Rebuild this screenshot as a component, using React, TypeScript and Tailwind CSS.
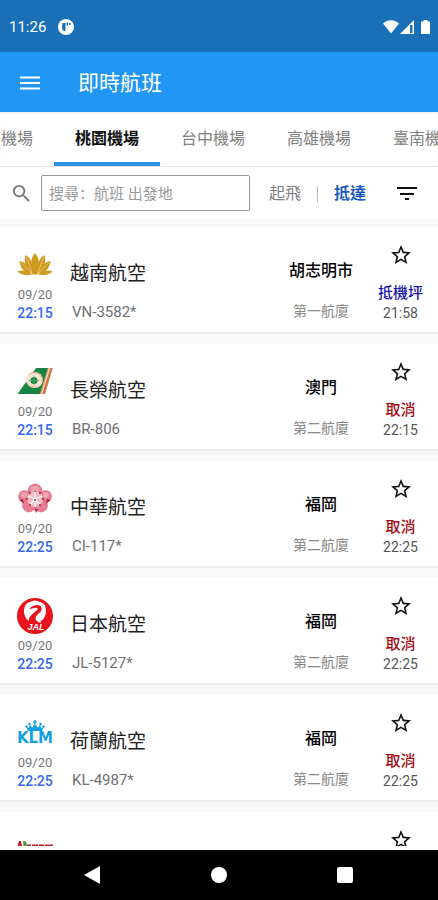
import { useState, type ReactNode } from 'react'

type Flight = {
  id: string
  airline: string
  code: string
  city: string
  terminal: string
  date: string
  time: string
  status: string
  actual: string
  logo: ReactNode
}

function LotusLogo() {
  return (
    <svg viewBox="0 0 36 36" className="size-9" aria-hidden="true">
      <g fill="#cf9a1e">
        <path d="M18 6c4 4.500 5 10 2.500 21.500h-5C13 16 14 10.500 18 6z" />
        <path d="M8.500 8c5.500 3 7 8 6.500 17.500C8.500 21 6.500 15 8.500 8z" />
        <path d="M27.500 8c-5.500 3-7 8-6.500 17.500 6.500-4.500 8.500-10.500 6.500-17.500z" />
        <path d="M2.500 14c5.500 1 10.500 5 12.500 12.500C7.500 26 3 21 2.500 14z" />
        <path d="M33.500 14c-5.500 1-10.500 5-12.500 12.500 7.500-.5 12-5.500 12.500-12.500z" />
        <path d="M.5 24.500c5-2 10-.5 15.500 2.500-5.500 2-11 1.500-15.500-2.500z" />
        <path d="M35.500 24.500c-5-2-10-.5-15.500 2.500 5.500 2 11 1.500 15.500-2.500z" />
      </g>
      <path
        d="M14.800 26C13 19 11 14 9 10M21.200 26C23 19 25 14 27 10M15 27C11 22 7 18 4 16M21 27c4-5 8-9 11-11"
        fill="none"
        stroke="#f3dfa6"
        strokeWidth=".6"
      />
    </svg>
  )
}

function EvaLogo() {
  return (
    <svg viewBox="0 0 36 36" className="size-9" aria-hidden="true">
      <path d="M.5 30L19 4h16.500L28 30z" fill="#168444" />
      <path d="M35.500 4H31l-8 26h4.500z" fill="#f6e3cc" />
      <path d="M35.500 4h-2.200l-8 26h2.200z" fill="#dd6a33" />
      <path d="M31.500 4l-7.800 26" stroke="#dd6a33" strokeWidth=".7" />
      <ellipse cx="17.500" cy="16" rx="8.500" ry="8" fill="#f5e6d3" />
      <path d="M12 10.500a8 8 0 0 1 13 8" fill="none" stroke="#e0a878" />
      <path d="M10 19a8 8 0 0 0 10 3.500" fill="none" stroke="#e0a878" strokeWidth=".8" />
      <circle cx="17" cy="16.500" r="3.500" fill="#168444" />
      <path d="M17 11.500v10M12 16.500h10" stroke="#57a777" strokeWidth=".8" />
    </svg>
  )
}

function PlumLogo() {
  return (
    <svg viewBox="0 0 36 36" className="size-9" aria-hidden="true">
      <g fill="#e67c8f" stroke="#d4586f" strokeWidth=".5">
        <ellipse cx="18" cy="9.500" rx="7" ry="6.500" />
        <circle cx="7.500" cy="15.500" r="6" />
        <circle cx="28.500" cy="15.500" r="6" />
        <circle cx="12" cy="24.500" r="6.500" />
        <circle cx="24" cy="24.500" r="6.500" />
      </g>
      <g fill="#f0a4b1">
        <ellipse cx="18" cy="8" rx="4.500" ry="3" />
        <circle cx="7" cy="14" r="3" />
        <circle cx="29" cy="14" r="3" />
      </g>
      <circle cx="18" cy="18" r="8" fill="#f3bac3" />
      <path
        d="M18 18v-7M18 18l-7-3M18 18l7-3M18 18l-5 6M18 18l5 6M18 18v8"
        stroke="#fff"
        strokeWidth="1.200"
      />
      <g fill="#a92443">
        <circle cx="13" cy="12" r="1" />
        <circle cx="18" cy="10.500" r=".8" />
        <circle cx="23" cy="12" r="1" />
        <circle cx="10" cy="18" r="1" />
        <circle cx="26" cy="18" r="1" />
        <circle cx="13" cy="24" r="1" />
        <circle cx="23" cy="24" r="1" />
        <circle cx="18" cy="19" r="1" />
        <path d="M17 28l2.500 4 1.500-4zM2.500 19l4.500 4-1-5zM33.500 19l-4.500 4 1-5z" />
      </g>
    </svg>
  )
}

function JalLogo() {
  return (
    <svg viewBox="0 0 36 36" className="size-9" aria-hidden="true">
      <circle cx="18" cy="18" r="18" fill="#e8141c" />
      <path
        d="M18 2.500C9 4 5 9 5 15.500 5 20 7.500 23 11 25h13c4.500-2 7-5.500 7-10C31 9 27 4 18 2.500z"
        fill="#fff"
      />
      <path
        d="M8.500 7C5.500 13 7 20 13 24l-3 2C3 22 2 13 5 9zM27.500 7c3 6 1.500 13-4.500 17l3 2c7-4 8-13 5-17z"
        fill="#e8141c"
      />
      <path
        d="M12 11.500c2-3 5-4.500 8-4.500 4 0 5.500 3 4 6-1.500 2.500-5 4-5.500 7 0 2 1.500 4 5.500 5H12c-1-4 1-7 4-9.500 2.500-2 5-3.500 4.500-5-.5-1.500-4-.5-8.500 1z"
        fill="#e8141c"
      />
      <text
        x="19"
        y="32"
        textAnchor="middle"
        fontFamily="Liberation Sans, sans-serif"
        fontSize="9"
        fontWeight="700"
        fontStyle="italic"
        fill="#fff"
      >
        JAL
      </text>
    </svg>
  )
}

function KlmLogo() {
  return (
    <svg viewBox="0 0 40 36" className="h-9 w-10" aria-hidden="true">
      <g fill="#12a0df">
        <path d="M19.300 5h1.400v1.300H22v1.200h-1.300V9h-1.400V7.500H18V6.300h1.300z" />
        <circle cx="14.500" cy="9" r="1.300" />
        <circle cx="25.500" cy="9" r="1.300" />
        <circle cx="11.500" cy="11.500" r="1.200" />
        <circle cx="28.500" cy="11.500" r="1.200" />
        <path d="M11.500 12l2.500 1 .5-3 3 2.500L20 8.500l2.500 4 3-2.500.5 3 2.500-1-1.500 4H13z" />
      </g>
      <text
        x="20"
        y="28"
        textAnchor="middle"
        fontFamily="DejaVu Sans, sans-serif"
        fontSize="15"
        fontWeight="700"
        fill="#12a0df"
      >
        KLM
      </text>
    </svg>
  )
}

function RedLogo() {
  return (
    <svg viewBox="0 0 40 36" className="h-9 w-10" aria-hidden="true">
      <path d="M4 9h2l2 10H1z" fill="#b81f2b" />
      <path d="M8 9h2l2 3-2 7H9z" fill="#53923c" />
      <path d="M12 12.500h4v7h-4zM17 12.500h6v7h-6zM24 12.500h5v7h-5zM30 12.500h8v7h-8z" fill="#b81f2b" />
    </svg>
  )
}

const base = { date: '09/20', terminal: '第二航廈', status: '取消' }

const flights: Flight[] = [
  { ...base, id: 'vn', airline: '越南航空', code: 'VN-3582*', city: '胡志明市', terminal: '第一航廈', time: '22:15', status: '抵機坪', actual: '21:58', logo: <LotusLogo /> },
  { ...base, id: 'br', airline: '長榮航空', code: 'BR-806', city: '澳門', time: '22:15', actual: '22:15', logo: <EvaLogo /> },
  { ...base, id: 'ci', airline: '中華航空', code: 'CI-117*', city: '福岡', time: '22:25', actual: '22:25', logo: <PlumLogo /> },
  { ...base, id: 'jl', airline: '日本航空', code: 'JL-5127*', city: '福岡', time: '22:25', actual: '22:25', logo: <JalLogo /> },
  { ...base, id: 'kl', airline: '荷蘭航空', code: 'KL-4987*', city: '福岡', time: '22:25', actual: '22:25', logo: <KlmLogo /> },
  { ...base, id: 'next', airline: '', code: '', city: '', terminal: '', date: '', time: '', status: '', actual: '', logo: <RedLogo /> },
]

const airports = ['松山機場', '桃園機場', '台中機場', '高雄機場', '臺南機場']

function StatusBar() {
  return (
    <div className="flex h-[52px] shrink-0 items-center bg-[#1a70b7] pt-0.5 pr-[7px] pl-[9px] text-white">
      <span className="text-[15px] leading-5">11:26</span>
      <svg viewBox="0 0 16 16" className="ml-3 size-4" aria-hidden="true">
        <circle cx="8" cy="8" r="8" fill="#fff" />
        <path d="M4.500 4h3v8H6c-1.500-1-2-2-2-4zM8.500 3.500h1.500v3H8.500zM11 4h1.500v2H11z" fill="#1a70b7" />
      </svg>
      <svg viewBox="0 0 48 16" className="ml-auto h-4 w-12" aria-hidden="true">
        <g fill="#fff">
          <path d="M0 4.500C4.500 0 11.500 0 16 4.500L8 14.500z" />
          <path d="M31 1v14H17z" />
          <path d="M40.500 1h4v1.500H47V15h-9V2.500h2.500z" />
        </g>
        <path d="M27 6v8h2.500V6z" fill="#1a70b7" />
      </svg>
    </div>
  )
}

function FlightCard({ flight }: { flight: Flight }) {
  const [starred, setStarred] = useState(false)

  return (
    <li className="flex h-[107px] shrink-0 border-b-2 border-[#ececec] bg-white">
      <div className="flex w-[70px] flex-col items-center pt-5">
        {flight.logo}
        <span className="mt-1 text-[13px] leading-4 text-[#777]">{flight.date}</span>
        <span className="text-sm leading-5 font-medium text-[#3468f0]">{flight.time}</span>
      </div>
      <div className="flex flex-1 flex-col pt-[33px]">
        <span className="text-[19px] leading-7 text-[#222]">{flight.airline}</span>
        <span className="mt-[14px] pl-[2px] text-[15px] leading-5 text-[#707070]">{flight.code}</span>
      </div>
      <div className="flex w-[84px] flex-col items-center pt-8">
        <span className="text-base leading-6 font-medium text-black">{flight.city}</span>
        <span className="mt-[18px] text-sm leading-5 text-[#888]">{flight.terminal}</span>
      </div>
      <div className="flex w-[75px] flex-col items-center pt-4">
        <button type="button" aria-label="收藏" aria-pressed={starred} onClick={() => setStarred(!starred)}>
          <svg viewBox="0 0 24 24" className="size-6" aria-hidden="true">
            <path
              d="M22 9.240l-7.190-.62L12 2 9.190 8.630 2 9.240l5.460 4.730L5.820 21 12 17.270 18.180 21l-1.630-7.030L22 9.240zM12 15.400l-3.760 2.270 1-4.280-3.320-2.880 4.380-.38L12 6.100l1.710 4.040 4.380.38-3.320 2.880 1 4.280L12 15.400z"
              fill="#111"
            />
          </svg>
        </button>
        <span className={`mt-4 text-[15px] leading-5 font-medium ${flight.status === '取消' ? 'text-[#a00d12]' : 'text-[#1712a8]'}`}>
          {flight.status}
        </span>
        <span className="text-sm leading-5 text-[#555]">{flight.actual}</span>
      </div>
    </li>
  )
}

export default function App() {
  const [airport, setAirport] = useState('桃園機場')
  const [query, setQuery] = useState('')
  const [mode, setMode] = useState('arrive')

  return (
    <div className="flex h-screen flex-col overflow-hidden bg-white font-[Roboto,'Noto_Sans_CJK_TC',sans-serif]">
      <StatusBar />
      <header className="flex h-[60px] shrink-0 items-center bg-[#2196f3] pt-0.5 pl-5 text-white">
        <button type="button" aria-label="選單">
          <svg viewBox="0 0 20 16" className="h-4 w-5" aria-hidden="true">
            <path d="M0 2.500h20M0 8h20M0 13.500h20" stroke="#fff" strokeWidth="2.200" />
          </svg>
        </button>
        <h1 className="ml-[38px] text-[21px] leading-7">即時航班</h1>
      </header>

      <nav className="flex h-[55px] shrink-0 overflow-hidden border-b border-[#e4e4e4] shadow-[inset_0_2px_2px_#0000000d]">
        <div className="-ml-[52px] flex">
          {airports.map((name) => (
            <button
              key={name}
              type="button"
              onClick={() => setAirport(name)}
              className={`w-[106px] shrink-0 border-b-4 pt-1 text-base leading-6 ${
                airport === name ? 'border-[#2f8fe0] font-bold text-[#111]' : 'border-transparent text-[#808080]'
              }`}
            >
              {name}
            </button>
          ))}
        </div>
      </nav>

      <div className="flex h-[52px] shrink-0 items-center">
        <label htmlFor="search" className="ml-[10px] flex" aria-label="搜尋">
          <svg viewBox="0 0 24 24" className="size-[23px]" aria-hidden="true">
            <path
              d="M15.500 14h-.79l-.28-.27A6.470 6.470 0 0 0 16 9.500 6.500 6.500 0 1 0 9.500 16c1.610 0 3.090-.59 4.230-1.570l.27.28v.79l5 4.990L20.490 19l-4.990-5zm-6 0a4.500 4.500 0 1 1 0-9 4.500 4.500 0 0 1 0 9z"
              fill="#777"
            />
          </svg>
        </label>
        <input
          id="search"
          type="text"
          value={query}
          onChange={(e) => setQuery(e.target.value)}
          placeholder="搜尋：航班 出發地"
          className="ml-2 h-9 min-w-0 flex-1 rounded-xs border border-[#999] px-[7px] pt-0.5 font-[Roboto,'Noto_Sans_CJK_SC',sans-serif] text-[15px] placeholder-[#999] outline-none"
        />
        <div className="flex w-[188px] shrink-0 items-center pt-0.5 text-base leading-6">
          <button
            type="button"
            onClick={() => setMode('depart')}
            className={`ml-[19px] ${mode === 'depart' ? 'font-bold text-[#1c5ab8]' : 'text-[#808080]'}`}
          >
            起飛
          </button>
          <span className="ml-4 h-4 w-px bg-[#bbb]" />
          <button
            type="button"
            onClick={() => setMode('arrive')}
            className={`ml-4 ${mode === 'arrive' ? 'font-bold text-[#1c5ab8]' : 'text-[#808080]'}`}
          >
            抵達
          </button>
          <button type="button" aria-label="篩選" className="ml-[31px]">
            <svg viewBox="0 0 20 14" className="h-[14px] w-5" aria-hidden="true">
              <path d="M0 1h20M3 7h14M8 12h4" stroke="#111" strokeWidth="2" />
            </svg>
          </button>
        </div>
      </div>

      <ul className="flex min-h-0 flex-1 flex-col gap-[10px] overflow-hidden bg-[#f8f8f8] pt-2">
        {flights.map((flight) => (
          <FlightCard key={flight.id} flight={flight} />
        ))}
      </ul>

      <div className="flex h-[54px] shrink-0 items-center justify-around border-t-4 border-white bg-black pr-[30px] pl-7">
        <button type="button" aria-label="返回">
          <svg viewBox="0 0 18 18" className="size-[18px]" aria-hidden="true">
            <path d="M17 0v18L1 9z" fill="#fff" />
          </svg>
        </button>
        <button type="button" aria-label="主畫面" className="size-4 rounded-full bg-white" />
        <button type="button" aria-label="最近使用" className="size-4 rounded-xs bg-white" />
      </div>
    </div>
  )
}
